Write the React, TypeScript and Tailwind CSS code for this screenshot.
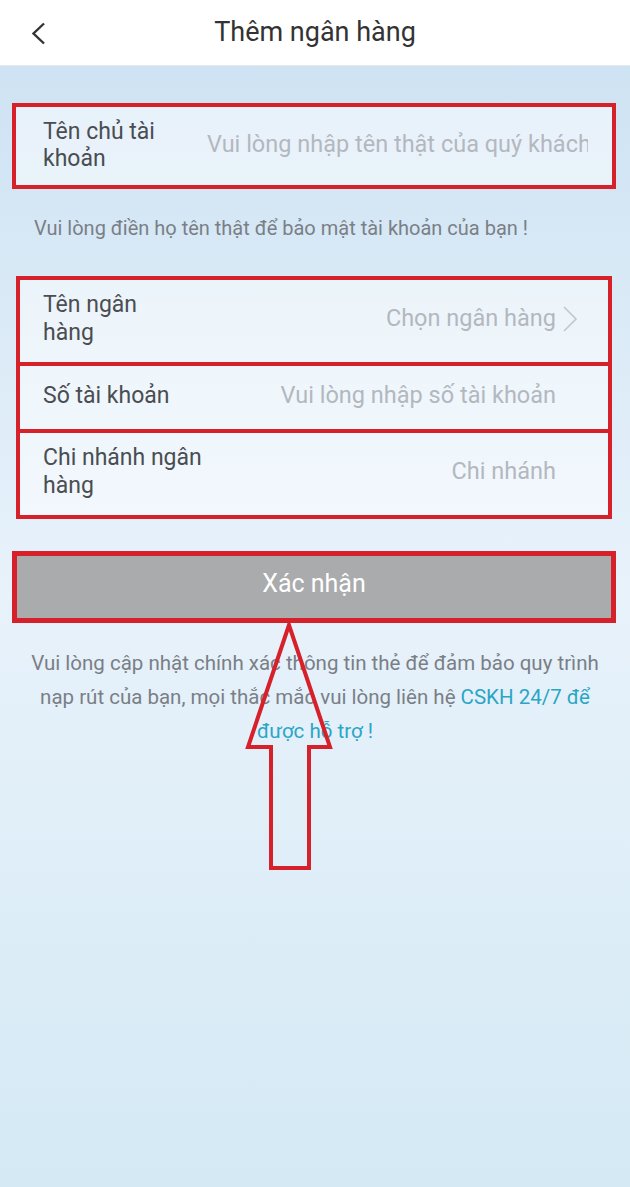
const font = { fontFamily: "Roboto, 'Noto Sans', sans-serif" };

function Row({ label, value, arrow, h }: { label: React.ReactNode; value: string; arrow?: boolean; h: string }) {
  return (
    <div className={`flex items-center border-4 border-[#d6212b] bg-white/50 pb-[4px] pl-[23px] pr-[30px] ${h}`}>
      <div className="w-[180px] shrink-0 text-[23px] leading-[28px] text-[#4a4d52]">{label}</div>
      <div className="flex flex-1 items-center justify-end text-[23.5px] text-[#b3b8bf]">
        <span className="whitespace-nowrap">{value}</span>
        <span className="flex w-[22px] justify-end">
          {arrow && (
            <svg width="16" height="28" viewBox="0 0 16 28" fill="none">
              <polyline points="2,2 14,14 2,26" stroke="#c3c7cc" strokeWidth="1.6" />
            </svg>
          )}
        </span>
      </div>
    </div>
  );
}

export default function App() {
  return (
    <div
      className="relative min-h-[1187px] w-[630px] overflow-hidden bg-gradient-to-b from-[#cbe1f2] via-[#e8f2fb] to-[#d4e9f4]"
      style={font}
    >
      <header className="relative flex h-[66px] items-center justify-center border-b border-[#e6e9ee] bg-white">
        <svg className="absolute left-[31px] top-[22px]" width="15" height="23" viewBox="0 0 15 23" fill="none">
          <polyline points="13,1.5 2.5,11.5 13,21.5" stroke="#333" strokeWidth="2.4" />
        </svg>
        <h1 className="text-[27px] text-[#333]">Thêm ngân hàng</h1>
      </header>

      <div className="ml-[12px] mr-[14px] mt-[37px] flex h-[86px] items-center border-4 border-[#d6212b] bg-white/50 pb-[3px] pl-[27px] pr-[24px]">
        <div className="w-[164px] shrink-0 text-[23px] leading-[27px] text-[#4a4d52]">
          Tên chủ tài
          <br />
          khoản
        </div>
        <div className="flex-1 overflow-hidden whitespace-nowrap text-[23.5px] text-[#b3b8bf]">
          Vui lòng nhập tên thật của quý khách
        </div>
      </div>

      <p className="mt-[24px] whitespace-nowrap pl-[34px] text-[20px] text-[#7a7f86]">
        Vui lòng điền họ tên thật để bảo mật tài khoản của bạn !
      </p>

      <div className="ml-[16px] mr-[18px] mt-[33px] flex flex-col">
        <Row
          h="h-[90px]"
          label={
            <>
              Tên ngân
              <br />
              hàng
            </>
          }
          value="Chọn ngân hàng"
          arrow
        />
        <Row h="h-[67px] border-t-0" label="Số tài khoản" value="Vui lòng nhập số tài khoản" />
        <Row
          h="h-[86px] border-t-0"
          label={
            <>
              Chi nhánh ngân
              <br />
              hàng
            </>
          }
          value="Chi nhánh"
        />
      </div>

      <div className="ml-[12px] mr-[14px] mt-[32px] flex h-[72px] items-center justify-center border-[5px] border-[#d6212b] bg-[#aaabad] pb-[6px]">
        <span className="text-[25px] text-white">Xác nhận</span>
      </div>

      <div className="mt-[23px] flex flex-col items-center text-[20.5px] leading-[34px] text-[#7a7f86]">
        <span className="whitespace-nowrap">Vui lòng cập nhật chính xác thông tin thẻ để đảm bảo quy trình</span>
        <span className="whitespace-nowrap">
          nạp rút của bạn, mọi thắc mắc vui lòng liên hệ <span className="text-[#2aa6c6]">CSKH 24/7 để</span>
        </span>
        <span className="whitespace-nowrap text-[#2aa6c6]">được hỗ trợ !</span>
      </div>

      <svg className="pointer-events-none absolute left-0 top-0" width="630" height="1187" viewBox="0 0 630 1187">
        <polygon
          points="289,625 248,747 271,747 271,868 309,868 309,747 330,747"
          fill="none"
          stroke="#d6212b"
          strokeWidth="4"
        />
      </svg>
    </div>
  );
}
